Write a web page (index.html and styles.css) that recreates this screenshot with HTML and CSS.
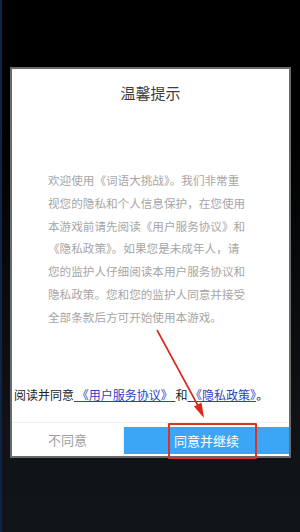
FILE: index.html
```html
<!DOCTYPE html>
<html lang="zh-CN">
<head>
<meta charset="utf-8">
<title>温馨提示</title>
<link rel="stylesheet" href="styles.css">
</head>
<body>
<div class="screen">
  <div class="dialog">
    <h1 class="title">温馨提示</h1>
    <p class="content">欢迎使用《词语大挑战》。我们非常重视您的隐私和个人信息保护，在您使用本游戏前请先阅读《用户服务协议》和《隐私政策》。如果您是未成年人，请您的监护人仔细阅读本用户服务协议和隐私政策。您和您的监护人同意并接受全部条款后方可开始使用本游戏。</p>
    <p class="agree">阅读并同意<a class="link" href="#"> 《用户服务协议》 </a>和<a class="link" href="#"> 《隐私政策》</a>。</p>
    <div class="actions">
      <button class="btn btn-no">不同意</button>
      <button class="btn btn-yes">同意并继续</button>
    </div>
  </div>
  <div class="highlight"></div>
  <svg class="arrow" width="300" height="532" viewBox="0 0 300 532">
    <line x1="155" y1="330" x2="200" y2="413" stroke="#d9271d" stroke-width="1.6"/>
    <polygon points="202,418 199.5,402.5 192,406.5" fill="#d9271d"/>
  </svg>
</div>
</body>
</html>
```
FILE: styles.css
```css
* { box-sizing: border-box; }
html, body { margin: 0; padding: 0; }
body {
  font-family: "Noto Sans CJK SC", "Noto Sans", sans-serif;
  background: #000;
}
.screen {
  position: relative;
  width: 300px;
  height: 532px;
  overflow: hidden;
  padding: 67px 0 0 8px;
  border-left: 2px solid #0c2446;
  background: linear-gradient(#000 0, #000 120px, #0f1216 420px, #111419 532px);
}
.dialog {
  width: 281px;
  background: #fff;
  border: 2px solid #6b6b6b;
  display: flex;
  flex-direction: column;
}
.title {
  margin: 0;
  padding-top: 14px;
  font-size: 15px;
  line-height: 20px;
  font-weight: normal;
  color: #3d3d3d;
  text-align: center;
}
.content {
  margin: 66px 0 0 36px;
  width: 199px;
  font-size: 11.6px;
  line-height: 22.8px;
  color: #a6a6a6;
}
.agree {
  margin: 57px 0 0 2px;
  font-size: 12px;
  line-height: 18px;
  color: #222;
  white-space: nowrap;
}
.link {
  color: #2a3fc8;
  text-decoration: underline;
}
.actions {
  margin-top: 18px;
  border-top: 1px solid #f0f0f0;
  height: 34px;
  display: flex;
}
.btn {
  border: none;
  font-family: inherit;
  font-size: 13px;
  padding: 0;
}
.btn-no {
  width: 112px;
  background: #fff;
  color: #a0a0a0;
  border-right: 1px solid #f0f0f0;
}
.btn-yes {
  flex: 1;
  margin: 4px 0 2px;
  background: #3ca6f6;
  color: #fff;
}
.highlight {
  position: absolute;
  left: 166px;
  top: 423px;
  width: 89px;
  height: 36px;
  border: 2px solid #d9332a;
  border-radius: 1px;
}
.arrow {
  position: absolute;
  left: 0;
  top: 0;
  pointer-events: none;
}
```
